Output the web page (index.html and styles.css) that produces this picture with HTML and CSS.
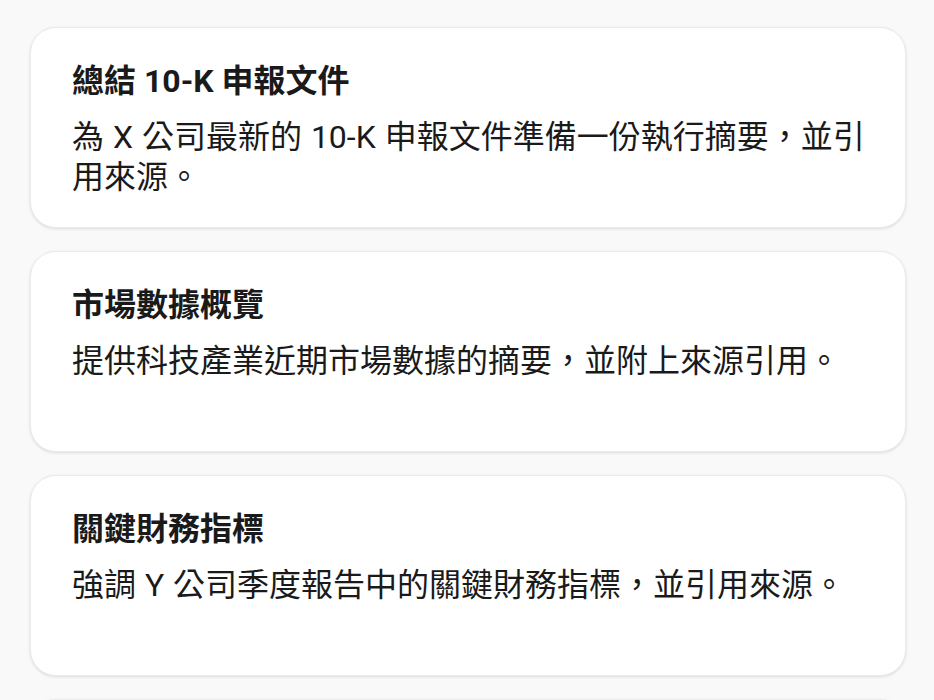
FILE: index.html
```html
<!DOCTYPE html>
<html lang="zh-Hant">
<head>
<meta charset="utf-8">
<link rel="stylesheet" href="styles.css">
</head>
<body>
<div class="list">
  <div class="card">
    <div class="title">總結 10-K 申報文件</div>
    <div class="desc">為 X 公司最新的 10-K 申報文件準備一份執行摘要，並引用來源。</div>
  </div>
  <div class="card">
    <div class="title">市場數據概覽</div>
    <div class="desc">提供科技產業近期市場數據的摘要，並附上來源引用。</div>
  </div>
  <div class="card">
    <div class="title">關鍵財務指標</div>
    <div class="desc">強調 Y 公司季度報告中的關鍵財務指標，並引用來源。</div>
  </div>
  <div class="card">
    <div class="title">&nbsp;</div>
    <div class="desc">&nbsp;</div>
  </div>
</div>
</body>
</html>
```
FILE: styles.css
```css
html, body {
  margin: 0;
  padding: 0;
  background: #f9f9f9;
  overflow: hidden;
}
body {
  font-family: Roboto, "Noto Sans CJK TC", sans-serif;
  color: #1a1a1a;
}
.list {
  display: flex;
  flex-direction: column;
  gap: 23px;
  padding: 27px 28px 0 30px;
}
.card {
  box-sizing: border-box;
  height: 201px;
  background: #ffffff;
  border: 1px solid #ebebeb;
  border-radius: 26px;
  box-shadow: 0 1px 3px rgba(0, 0, 0, 0.12);
  padding: 33px 20px 0 41px;
}
.title {
  font-size: 32px;
  font-weight: 700;
  line-height: 40px;
  margin-bottom: 16px;
}
.desc {
  font-size: 32px;
  line-height: 40px;
  font-weight: 400;
  word-spacing: 1px;
}
```
